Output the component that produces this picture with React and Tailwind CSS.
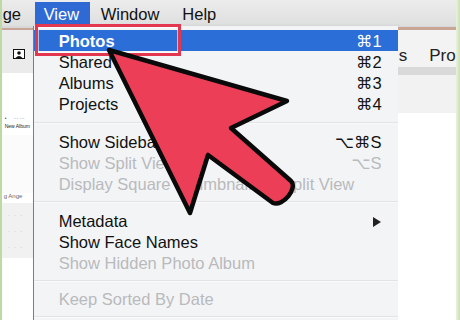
import React from "react";

const groups = [
  {
    items: [
      { label: "Photos", sc: "⌘1", active: true },
      { label: "Shared", sc: "⌘2" },
      { label: "Albums", sc: "⌘3" },
      { label: "Projects", sc: "⌘4" },
    ],
    sep: "h-[17px]",
  },
  {
    items: [
      { label: "Show Sidebar", sc: "⌥⌘S" },
      { label: "Show Split View", sc: "⌥S", disabled: true },
      { label: "Display Square Thumbnails in Split View", disabled: true },
    ],
    sep: "h-[16px]",
  },
  {
    items: [
      { label: "Metadata", sub: true },
      { label: "Show Face Names" },
      { label: "Show Hidden Photo Album", disabled: true },
    ],
    sep: "h-[15px]",
  },
  {
    items: [{ label: "Keep Sorted By Date", disabled: true }],
    sep: "h-[15px]",
  },
];

function Row({ item }) {
  const color = item.active
    ? "bg-[#2c6ed8] text-white"
    : item.disabled
    ? "text-[#b9babc]"
    : "text-[#111]";
  return (
    <div className={`flex h-[21px] items-center pl-[25px] pr-[16px] pt-[2px] ${color}`}>
      <span className={`flex-1 whitespace-nowrap ${item.active ? "font-bold" : ""}`}>{item.label}</span>
      {item.sc && <span className="whitespace-nowrap">{item.sc}</span>}
      {item.sub && (
        <span className="mr-[1px] h-0 w-0 border-y-[5px] border-l-[8px] border-y-transparent border-l-[#222]" />
      )}
    </div>
  );
}

export default function App() {
  return (
    <div className="relative flex h-[320px] w-[460px] overflow-hidden bg-white font-['Liberation_Sans','DejaVu_Sans',sans-serif] text-[16.5px]">
      <div className="w-[3px] bg-[#bedaa2]" />
      <div className="flex flex-1 flex-col">
        {/* menu bar */}
        <div className="flex h-[26px] items-center bg-gradient-to-b from-[#ececec] to-[#dedfdf] pt-[2px] text-[#111]">
          <span className="w-[33px] pl-[1px]">ge</span>
          <span className="flex h-[24px] w-[55px] items-center bg-[#2f6ad4] pl-[9px] text-white">View</span>
          <span className="ml-[11px]">Window</span>
          <span className="ml-[23px]">Help</span>
        </div>
        <div className="flex flex-1">
          {/* left window strip */}
          <div className="flex w-[31px] flex-col">
            <div className="h-[2px] bg-[#d8d8d8]" />
            <div className="h-[2px] bg-[#c8a597]" />
            <div className="flex h-[43px] items-end bg-[#ebebeb] pb-[14px] pl-[11px]">
              <svg width="12" height="10" viewBox="0 0 12 10">
                <rect x="0.5" y="0.5" width="11" height="9" fill="#fff" stroke="#111" />
                <circle cx="6" cy="4" r="1.8" fill="#111" />
                <path d="M2.5 9 Q6 5 9.5 9Z" fill="#111" />
              </svg>
            </div>
            <div className="h-[37px] bg-white" />
            <div className="flex h-[25px] flex-col justify-center gap-[3px] bg-white pl-[3px] text-[5px] leading-none text-[#555]">
              <span className="whitespace-nowrap">•&nbsp;&nbsp;&nbsp;&nbsp;&nbsp;··· ···</span>
              <span className="whitespace-nowrap text-[#222]">New Album</span>
            </div>
            <div className="h-[58px] bg-[#fbfbfb]" />
            <div className="h-[10px] whitespace-nowrap pl-[2px] text-[6px] leading-none text-[#666]">g Ange</div>
            <div className="grid h-[55px] grid-cols-3 content-center gap-y-[10px] bg-[#f1f1f1] px-[6px] text-[6px] leading-none text-[#aaa]">
              <span>·</span><span>·</span><span>·</span>
              <span>·</span><span>·</span><span>·</span>
              <span>·</span><span>·</span><span>·</span>
            </div>
            <div className="flex-1 bg-white" />
          </div>
          {/* menu panel */}
          <div className="flex w-[365px] flex-col border-l border-[#7d7d7d] bg-[#f3f4f6] pt-[4px] shadow-[2px_0_3px_rgba(0,0,0,0.08)]">
            {groups.map((g, i) => (
              <React.Fragment key={i}>
                {g.items.map((it) => (
                  <Row key={it.label} item={it} />
                ))}
                <div className={`flex ${g.sep} items-center`}>
                  <div className="h-[2px] w-full border-t border-[#e2e3e5] bg-[#fafafa]" />
                </div>
              </React.Fragment>
            ))}
          </div>
          {/* right window strip */}
          <div className="flex flex-1 flex-col">
            <div className="h-[1px] bg-[#d8d8d8]" />
            <div className="h-[3px] bg-[#c9a595]" />
            <div className="flex h-[37px] items-end whitespace-nowrap bg-[#f3f3f3] pb-[3px] pl-[1px] text-[17px] leading-none text-[#222]">
              s<span className="ml-[22px]">Pro</span>
            </div>
            <div className="h-[8px] bg-[#d9d9d9]" />
            <div className="h-[38px] bg-[#f2f2f2]" />
            <div className="flex-1 bg-white" />
          </div>
        </div>
      </div>
      <div className="w-[8px] bg-gradient-to-r from-[#e9f3df] to-[#c9e1b2]" />

      {/* red highlight box */}
      <div className="absolute left-[35px] top-[24px] h-[32px] w-[146px] border-[3px] border-[#e2374f] shadow-[inset_0_0_0_1px_rgba(255,255,255,0.6)]" />

      {/* big arrow */}
      <svg className="pointer-events-none absolute left-0 top-0" width="460" height="320" viewBox="0 0 460 320">
        <path
          d="M109 50 L287 101 L231 128 L291 181 C298 188 283 207 273 203 L208 155 L190 213 Z"
          fill="#ec3f57"
          stroke="#0a0a0a"
          strokeWidth="4.5"
          strokeLinejoin="round"
        />
      </svg>
    </div>
  );
}
